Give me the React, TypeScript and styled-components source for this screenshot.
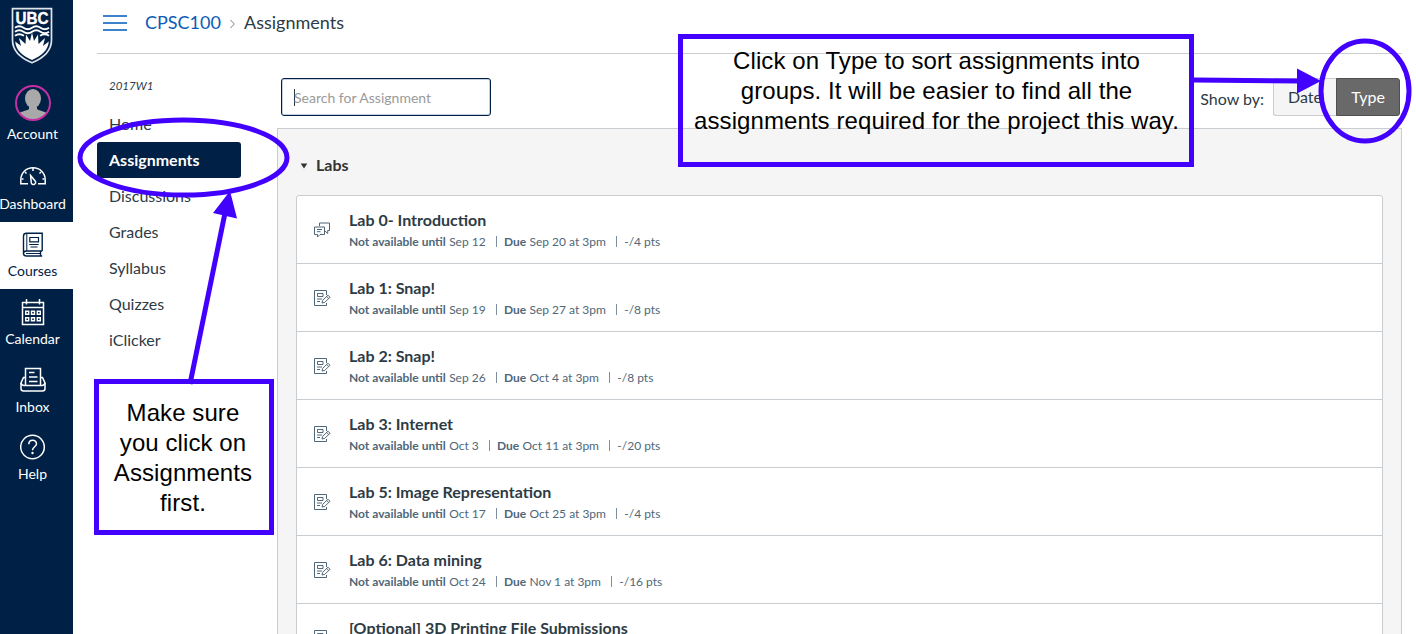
import React from "react";
import styled, { createGlobalStyle } from "styled-components";

const navy = "#002145";
const ink = "#2d3b45";
const slate = "#4f6778";
const line = "#c7cdd1";
const violet = "#4200ff";

const GlobalStyle = createGlobalStyle`
  * { box-sizing: border-box; }
  html, body { margin: 0; padding: 0; }
  body {
    width: 1416px;
    height: 634px;
    overflow: hidden;
    background: #fff;
    color: ${ink};
    font-family: Lato, "Liberation Sans", sans-serif;
  }
`;

const Page = styled.div`
  position: relative;
  display: flex;
  width: 1416px;
  height: 634px;
  overflow: hidden;
`;

const Sidebar = styled.nav`
  display: flex;
  flex: none;
  flex-direction: column;
  width: 73px;
  height: 634px;
  background: ${navy};
`;

const LogoSlot = styled.div`
  display: flex;
  justify-content: center;
  height: 76px;
  padding: 7px 9px 0 0;
`;

const SideItem = styled.a<{ $height: number; $icon: number; $active?: boolean }>`
  display: flex;
  flex: none;
  flex-direction: column;
  align-items: center;
  justify-content: flex-end;
  height: ${(p) => p.$height}px;
  padding: 0 8px 8px 0;
  color: ${(p) => (p.$active ? navy : "#fff")};
  background: ${(p) => (p.$active ? "#fff" : navy)};

  svg { display: block; flex: none; margin-bottom: ${(p) => p.$icon}px; }
`;

const SideLabel = styled.span`
  font-size: 14px;
  line-height: 20px;
  white-space: nowrap;
`;

const Main = styled.main`
  display: flex;
  flex-direction: column;
  width: 1343px;
  padding: 0 14px 0 24px;
`;

const Header = styled.header`
  display: flex;
  flex: none;
  align-items: center;
  height: 54px;
  padding: 0 0 8px 6px;
  border-bottom: 1px solid ${line};
  font-size: 18px;
  line-height: 26px;
`;

const Burger = styled.span`
  display: flex;
  flex-direction: column;
  justify-content: space-between;
  width: 24px;
  height: 16px;
  margin-right: 18px;

  i { height: 2px; background: #3c82cc; }
`;

const Crumb = styled.span<{ $link?: boolean }>`
  margin-bottom: 2px;
  color: ${(p) => (p.$link ? "#0b5bb8" : ink)};
`;

const CrumbArrow = styled.svg`
  margin: 2px 9px 0 9px;
`;

const Columns = styled.div`
  display: flex;
  height: 580px;
`;

const CourseNav = styled.div`
  display: flex;
  flex: none;
  flex-direction: column;
  width: 180px;
  padding-top: 22px;
`;

const Term = styled.span`
  height: 30px;
  padding-left: 12px;
  font-size: 11.5px;
  font-style: italic;
  line-height: 20px;
`;

const CourseLink = styled.a<{ $active?: boolean }>`
  width: 144px;
  height: 36px;
  padding-left: 12px;
  border-radius: 3px;
  font-size: 16px;
  line-height: 36px;
  font-weight: ${(p) => (p.$active ? 700 : 400)};
  color: ${(p) => (p.$active ? "#fff" : ink)};
  background: ${(p) => (p.$active ? navy : "transparent")};
`;

const Content = styled.section`
  display: flex;
  flex: 1;
  flex-direction: column;
`;

const Toolbar = styled.div`
  display: flex;
  flex: none;
  justify-content: space-between;
  height: 74px;
  padding: 24px 2px 0 4px;
`;

const Search = styled.div`
  display: flex;
  align-items: center;
  width: 210px;
  height: 38px;
  padding: 0 0 0 12px;
  border: 1px solid ${navy};
  border-radius: 3px;
  box-shadow: inset 0 0 0 1px #c3d0dc;
  color: #9a9a9a;
  font-size: 14px;
`;

const Caret = styled.span`
  width: 1px;
  height: 17px;
  margin-right: -1px;
  background: ${ink};
`;

const ShowBy = styled.div`
  display: flex;
  align-items: center;
  height: 38px;
  font-size: 16px;
`;

const ShowLabel = styled.span`
  margin: 2px 9px 0 0;
  font-size: 16px;
`;

const Toggle = styled.button<{ $on?: boolean }>`
  width: ${(p) => (p.$on ? 64 : 63)}px;
  height: 38px;
  padding: 0 0 2px 0;
  border: 1px solid ${(p) => (p.$on ? "#4f4f4f" : line)};
  border-right-width: ${(p) => (p.$on ? 1 : 0)}px;
  border-radius: ${(p) => (p.$on ? "0 3px 3px 0" : "3px 0 0 3px")};
  background: ${(p) => (p.$on ? "#696969" : "#f5f5f5")};
  color: ${(p) => (p.$on ? "#fff" : ink)};
  font: 400 16px Lato, "Liberation Sans", sans-serif;
`;

const Panel = styled.div`
  height: 520px;
  padding: 0 18px;
  border: 1px solid ${line};
  background: #f5f5f5;
`;

const GroupTitle = styled.h2`
  display: flex;
  align-items: center;
  height: 66px;
  margin: 0;
  padding: 4px 0 0 4px;
  font-size: 16px;
  font-weight: 700;
  color: #333;

  svg { margin: 4px 8px 0 0; }
`;

const List = styled.ul`
  margin: 0;
  padding: 0;
  border: 1px solid ${line};
  border-radius: 3px 3px 0 0;
  background: #fff;
  list-style: none;
`;

const Row = styled.li`
  display: flex;
  height: 68px;
  padding-left: 17px;
  border-bottom: 1px solid ${line};
`;

const RowIcon = styled.span`
  width: 35px;
  padding-top: 26px;

  svg { display: block; }
`;

const RowText = styled.div`
  display: flex;
  flex-direction: column;
  padding-top: 13px;
`;

const RowTitle = styled.span`
  height: 22px;
  font-size: 16px;
  font-weight: 700;
  line-height: 22px;
`;

const Meta = styled.span`
  display: flex;
  font-size: 12px;
  line-height: 21px;
  color: ${slate};
  white-space: pre;

  b { margin-right: 3.3px; font-weight: 700; }
`;

const Divider = styled.i`
  width: 1px;
  height: 11px;
  margin: 5px 7.300px 0 10px;
  background: #7d8f9c;
`;

const Note = styled.div<{ $x: number; $y: number; $w: number; $h: number; $pad: string }>`
  position: absolute;
  left: ${(p) => p.$x}px;
  top: ${(p) => p.$y}px;
  width: ${(p) => p.$w}px;
  height: ${(p) => p.$h}px;
  padding: ${(p) => p.$pad};
  border: 5px solid ${violet};
  color: #000;
  font: 24px/30px "Liberation Sans", Arial, sans-serif;
  letter-spacing: 0.08px;
  text-align: center;
  white-space: pre;
`;

const Marks = styled.svg`
  position: absolute;
  left: 0;
  top: 0;
  pointer-events: none;
`;

const Logo = () => (
  <svg width="42" height="58" viewBox="0 0 42 58" fill="none">
    <path d="M1.500 1.700h39v31.300c0 11-8 18-19.500 22.800C9.500 51 1.500 44 1.500 33z" stroke="#dfe5eb" strokeWidth="1.700" />
    <text x="21" y="16.800" textAnchor="middle" textLength="33" lengthAdjust="spacingAndGlyphs" fill="#fff" stroke="#fff" strokeWidth=".4" fontFamily="Liberation Sans, sans-serif" fontSize="17" fontWeight="700">UBC</text>
    <g stroke="#fff" strokeWidth="1.900">
      <path d="M4 20.800q4.200-3 8.500 0t8.500 0 8.500 0 8.500 0" />
      <path d="M4 24.800q4.200-3 8.500 0t8.500 0 8.500 0 8.500 0" />
      <path d="M4 28.800q4.200-3 9 0M29 28.800q4.800-3 9 0" />
    </g>
    <path d="M4.200 34.500L10 39 8 31l6.500 6L15 27.500l4 6.500 2-8.500 2 8.500 4-6.500.5 9.500 6.500-6-2 8 5.800-4.500c-.5 8.500-7 14-16.800 18.500C11.200 48.500 4.700 43 4.200 34.500z" fill="#fff" />
  </svg>
);

const Avatar = () => (
  <svg width="36" height="36" viewBox="0 0 36 36">
    <defs><clipPath id="face"><circle cx="18" cy="18" r="17" /></clipPath></defs>
    <g clipPath="url(#face)" fill="#a9a9a9">
      <ellipse cx="18" cy="13.500" rx="8" ry="9.500" />
      <path d="M14 20h8v4c2 2 10 2 12 7v6H2v-6c2-5 10-5 12-7z" />
    </g>
    <circle cx="18" cy="18" r="17" fill="none" stroke="#c52fa3" strokeWidth="2" />
  </svg>
);

const Gauge = () => (
  <svg width="28" height="20" viewBox="0 0 28 20" fill="none" stroke="currentColor" strokeWidth="1.500">
    <path d="M9 17.700H1.800V14C1.800 7 7 1.800 14 1.800S26.200 7 26.200 14v3.700H19" />
    <path d="M14 2v3M6 6l1.500 1.500M22 6l-1.500 1.500M2.500 13h2M23.500 13h2" />
    <path d="M11.600 9.500l4.700 5.700a2.200 2.200 0 1 1-4 1.700z" />
  </svg>
);

const Book = () => (
  <svg width="22" height="26" viewBox="0 0 22 26" fill="none" stroke="currentColor" strokeWidth="1.400">
    <path d="M20.200 19V1.300H4.500C2.500 1.300 1.500 2.300 1.500 4v17.500M20.200 19H4.500c-4 0-4 5 0 5h15.700M18.500 19v5" />
    <path d="M4.800 1.500V19M4 21.500h14" strokeWidth="1" />
    <path d="M7.800 5.500h8.700v4.300H7.800zM7.200 12.500h9.500M8.500 15h7" strokeWidth="1.200" />
  </svg>
);

const Calendar = () => (
  <svg width="24" height="27" viewBox="0 0 24 27" fill="none" stroke="currentColor" strokeWidth="1.500">
    <path d="M1.500 3.500h21v22h-21zM1.500 8.500h21M5.500 0v5.500M18.500 0v5.500" />
    <path d="M4.700 12.200h3v3h-3zM10.500 12.200h3v3h-3zM16.300 12.200h3v3h-3zM4.700 18.700h3v3h-3zM10.500 18.700h3v3h-3zM16.300 18.700h3v3h-3z" strokeWidth="1.400" />
  </svg>
);

const Inbox = () => (
  <svg width="26" height="26" viewBox="0 0 26 26" fill="none" stroke="currentColor" strokeWidth="1.500">
    <path d="M5.500 18V1.500h15V18M5.500 10.500H3.500L1 16v5.500q0 2.500 2.500 2.500h19q2.500 0 2.500-2.500V16l-2.500-5.500h-2" />
    <path d="M1 16q.8 2.500 3 2.500h18q2.200 0 3-2.500M9 5.500h5.500M9 10h8.500M9 14.500h8.500" />
  </svg>
);

const Help = () => (
  <svg width="26" height="26" viewBox="0 0 26 26" fill="none" stroke="currentColor" strokeWidth="1.500">
    <circle cx="12.500" cy="13" r="11.800" />
    <path d="M8.800 10.300c0-5.300 7.700-5.300 7.700-.5 0 3-4 3-4 6.500" />
    <circle cx="12.500" cy="19" r="1.200" fill="currentColor" stroke="none" />
  </svg>
);

const Discussion = () => (
  <svg width="17" height="17" viewBox="0 0 17 17" fill="none" stroke={slate}>
    <path d="M5.500 4V1h10v7.500h-1.800v3L10.800 8.700" />
    <path d="M.5 5h10v7.500H6L3.500 15v-2.500h-3zM3 7.500h5M3 9.700h3.500" />
  </svg>
);

const Assignment = () => (
  <svg width="17" height="17" viewBox="0 0 17 17" fill="none" stroke={slate}>
    <path d="M12.500 5V.5H.5v15h12V13" />
    <path d="M3.500 3.500h5.500v3H3.500zM3 9h5M3 11.500h3" />
    <path d="M8 13l.7-2.700L14 5.200l2 2-5.200 5.200zM12.700 6.500l2 2" />
  </svg>
);

type Lab = { title: string; from: string; due: string; pts: string; talk?: boolean };

const labs: Lab[] = [
  { title: "Lab 0- Introduction", from: "Sep 12", due: "Sep 20 at 3pm", pts: "-/4 pts", talk: true },
  { title: "Lab 1: Snap!", from: "Sep 19", due: "Sep 27 at 3pm", pts: "-/8 pts" },
  { title: "Lab 2: Snap!", from: "Sep 26", due: "Oct 4 at 3pm", pts: "-/8 pts" },
  { title: "Lab 3: Internet", from: "Oct 3", due: "Oct 11 at 3pm", pts: "-/20 pts" },
  { title: "Lab 5: Image Representation", from: "Oct 17", due: "Oct 25 at 3pm", pts: "-/4 pts" },
  { title: "Lab 6: Data mining", from: "Oct 24", due: "Nov 1 at 3pm", pts: "-/16 pts" },
];

const courseLinks = ["Home", "Assignments", "Discussions", "Grades", "Syllabus", "Quizzes", "iClicker"];

const sideItems = [
  { label: "Account", icon: <Avatar />, height: 76, gap: 3 },
  { label: "Dashboard", icon: <Gauge />, height: 70, gap: 8 },
  { label: "Courses", icon: <Book />, height: 67, gap: 3, active: true },
  { label: "Calendar", icon: <Calendar />, height: 68, gap: 3 },
  { label: "Inbox", icon: <Inbox />, height: 68, gap: 4 },
  { label: "Help", icon: <Help />, height: 67, gap: 4 },
];

export default function App() {
  return (
    <>
      <GlobalStyle />
      <Page>
        <Sidebar>
          <LogoSlot><Logo /></LogoSlot>
          {sideItems.map((s) => (
            <SideItem key={s.label} $height={s.height} $icon={s.gap} $active={s.active}>
              {s.icon}
              <SideLabel>{s.label}</SideLabel>
            </SideItem>
          ))}
        </Sidebar>
        <Main>
          <Header>
            <Burger><i /><i /><i /></Burger>
            <Crumb $link>CPSC100</Crumb>
            <CrumbArrow width="5" height="10" viewBox="0 0 5 10" fill="none" stroke="#73808a">
              <path d="M.5 1L4.300 5 .5 9" />
            </CrumbArrow>
            <Crumb>Assignments</Crumb>
          </Header>
          <Columns>
            <CourseNav>
              <Term>2017W1</Term>
              {courseLinks.map((c) => (
                <CourseLink key={c} $active={c === "Assignments"}>{c}</CourseLink>
              ))}
            </CourseNav>
            <Content>
              <Toolbar>
                <Search><Caret />Search for Assignment</Search>
                <ShowBy>
                  <ShowLabel>Show by:</ShowLabel>
                  <Toggle>Date</Toggle>
                  <Toggle $on>Type</Toggle>
                </ShowBy>
              </Toolbar>
              <Panel>
                <GroupTitle>
                  <svg width="8" height="6" viewBox="0 0 8 6"><path d="M.7.500h6.600L4 5.500z" fill="#333" /></svg>
                  Labs
                </GroupTitle>
                <List>
                  {labs.map((l) => (
                    <Row key={l.title}>
                      <RowIcon>{l.talk ? <Discussion /> : <Assignment />}</RowIcon>
                      <RowText>
                        <RowTitle>{l.title}</RowTitle>
                        <Meta>
                          <b>Not available until</b>{l.from}<Divider /><b>Due</b>{l.due}<Divider />{l.pts}
                        </Meta>
                      </RowText>
                    </Row>
                  ))}
                  <Row>
                    <RowIcon><Assignment /></RowIcon>
                    <RowText><RowTitle>[Optional] 3D Printing File Submissions</RowTitle></RowText>
                  </Row>
                </List>
              </Panel>
            </Content>
          </Columns>
        </Main>
        <Note $x={94} $y={379} $w={180} $h={156} $pad="14px 2px 0 0">
          {"Make sure\nyou click on\nAssignments\nfirst."}
        </Note>
        <Note $x={678} $y={34} $w={516} $h={133} $pad="7px 0 0 1px">
          {"Click on Type to sort assignments into\ngroups. It will be easier to find all the\nassignments required for the project this way."}
        </Note>
        <Marks width="1416" height="634" fill="none" stroke={violet} strokeWidth="5">
          <ellipse cx="183.500" cy="157.500" rx="103.500" ry="37.500" />
          <path d="M190 384L225 213" />
          <path d="M230 191l-17 22 24 5.500z" fill={violet} stroke="none" />
          <ellipse cx="1365" cy="91" rx="44" ry="50" />
          <path d="M1194 80L1300 81" />
          <path d="M1321 81l-24-12.500v25z" fill={violet} stroke="none" />
        </Marks>
      </Page>
    </>
  );
}
